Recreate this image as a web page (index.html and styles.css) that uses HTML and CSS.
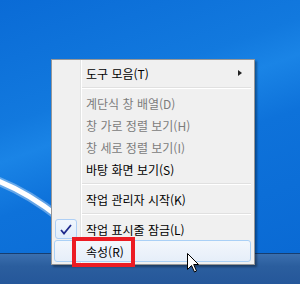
FILE: index.html
```html
<!DOCTYPE html>
<html lang="ko">
<head>
    <meta charset="UTF-8">
    <meta name="viewport" content="width=device-width, initial-scale=1.0">
    <title>작업 표시줄 메뉴</title>
    <link rel="stylesheet" href="styles.css">
</head>
<body>
    <div class="desktop">
        <!-- 배경의 흰 빛줄기 -->
        <svg class="streak" width="300" height="254" viewBox="0 0 300 254">
            <path d="M-10 178 Q 25 190 60 218" stroke="#ffffff" stroke-width="9" fill="none" opacity="0.35"/>
            <path d="M-10 178 Q 25 190 60 218" stroke="#ffffff" stroke-width="5" fill="none"/>
        </svg>

        <ul class="menu">
            <li class="item">
                <span class="icon"></span>
                <span class="label">도구 모음(T)</span>
                <span class="arrow"></span>
            </li>
            <li class="sep"></li>
            <li class="item disabled"><span class="icon"></span><span class="label">계단식 창 배열(D)</span></li>
            <li class="item disabled"><span class="icon"></span><span class="label">창 가로 정렬 보기(H)</span></li>
            <li class="item disabled"><span class="icon"></span><span class="label">창 세로 정렬 보기(I)</span></li>
            <li class="item"><span class="icon"></span><span class="label">바탕 화면 보기(S)</span></li>
            <li class="sep"></li>
            <li class="item"><span class="icon"></span><span class="label">작업 관리자 시작(K)</span></li>
            <li class="sep"></li>
            <li class="item">
                <span class="icon checked">
                    <svg width="12" height="11" viewBox="0 0 12 11">
                        <path d="M1 6 L4 9.5 L11 1" stroke="#1f2a8c" stroke-width="1.8" fill="none"/>
                    </svg>
                </span>
                <span class="label">작업 표시줄 잠금(L)</span>
            </li>
            <li class="item hover">
                <span class="icon"></span>
                <span class="label">속성(R)</span>
                <span class="mark"></span>
            </li>
        </ul>

        <svg class="cursor" width="13" height="20" viewBox="0 0 13 20">
            <path d="M0.5 0.5 L0.5 16.5 L4.5 12.5 L7.5 19 L9.5 18 L6.7 11.5 L11.5 11.5 Z" fill="#ffffff" stroke="#000000" stroke-width="1"/>
        </svg>
    </div>
    <div class="taskbar"></div>
</body>
</html>
```

FILE: styles.css
```css
/* 기본 */
body {
    margin: 0;
    width: 300px;
    height: 284px;
    overflow: hidden;
    display: flex;
    flex-direction: column;
    font-family: "Noto Sans CJK KR", "Noto Sans", sans-serif;
    font-size: 12px;
}

/* 바탕 화면 */
.desktop {
    position: relative;
    flex: 1;
    background: linear-gradient(160deg, #0a6bd6 0%, #1279de 35%, #1a84e6 45%, #0e72da 60%, #0a6ad4 100%);
}

.streak {
    position: absolute;
    left: 0;
    top: 0;
}

/* 작업 표시줄 */
.taskbar {
    height: 30px;
    border-top: 1px solid #173e70;
    background: linear-gradient(#3b6fae, #2b5e9e 40%, #25579a);
}

/* 컨텍스트 메뉴 */
.menu {
    position: absolute;
    left: 51px;
    top: 59px;
    width: 204px;
    box-sizing: border-box;
    margin: 0;
    padding: 2px;
    list-style: none;
    border: 1px solid #979797;
    background-color: #f0f0f0;
    background-image: linear-gradient(to right, transparent 28px, #e2e3e3 28px, #e2e3e3 29px, #ffffff 29px, #ffffff 30px, transparent 30px);
    box-shadow: 2px 2px 2px rgba(0, 0, 0, 0.35);
    z-index: 2;
}

.item {
    position: relative;
    display: flex;
    align-items: center;
    height: 22px;
    color: #000000;
}

.item.disabled {
    color: #7c7c7c;
}

.icon {
    width: 26px;
    height: 22px;
    flex-shrink: 0;
    display: flex;
    align-items: center;
    justify-content: center;
}

.icon.checked {
    width: 22px;
    height: 20px;
    margin: 0 3px 0 1px;
    box-sizing: border-box;
    border: 1px solid #aecff5;
    border-radius: 3px;
    background: linear-gradient(#f0f6fd, #e2eefb);
}

.label {
    flex: 1;
    padding-left: 6px;
    white-space: nowrap;
}

.arrow {
    width: 0;
    height: 0;
    margin-right: 10px;
    border-top: 3.5px solid transparent;
    border-bottom: 3.5px solid transparent;
    border-left: 4px solid #222222;
}

.item.hover {
    box-sizing: border-box;
    margin-right: 1px;
    border: 1px solid #aad0f6;
    border-radius: 3px;
    background: linear-gradient(#f3f7fc, #e6eef9);
}

.item.hover .icon {
    width: 25px;
}

/* 빨간 강조 상자 */
.mark {
    position: absolute;
    left: 17px;
    top: -4px;
    width: 63px;
    height: 30px;
    box-sizing: border-box;
    border: 4px solid #ec1c24;
}

.sep {
    height: 8px;
    margin-left: 28px;
    margin-right: 1px;
    background: linear-gradient(transparent 3px, #e0e0e0 3px, #e0e0e0 4px, #ffffff 4px, #ffffff 5px, transparent 5px);
}

/* 마우스 포인터 */
.cursor {
    position: absolute;
    left: 187px;
    top: 253px;
    z-index: 3;
}
```
